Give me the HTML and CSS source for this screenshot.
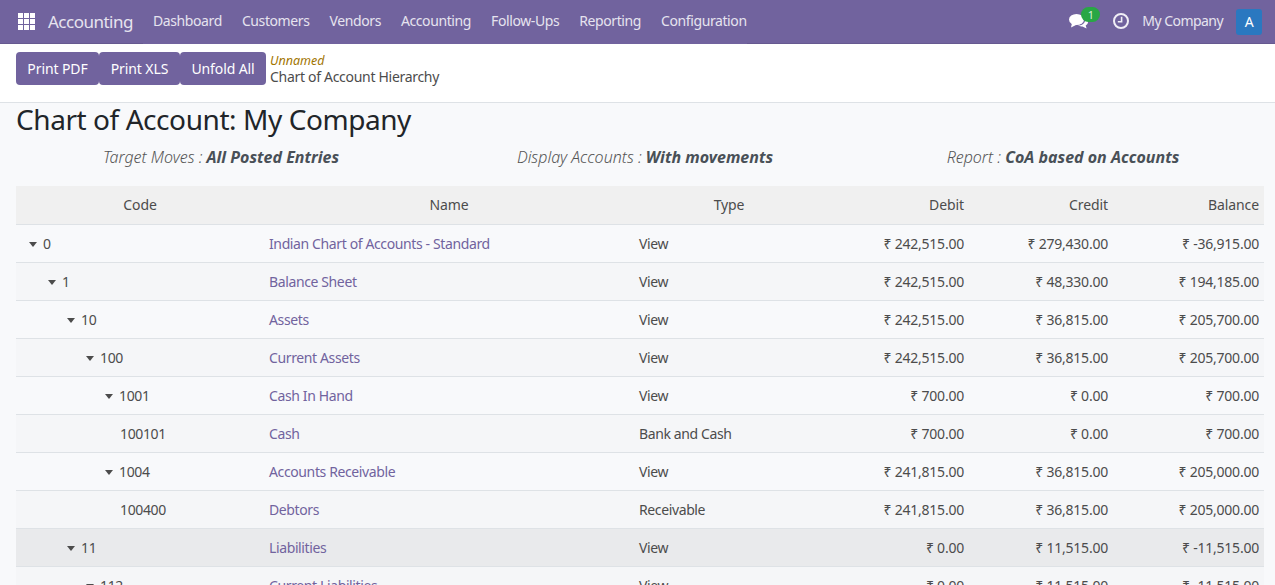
FILE: index.html
```html
<!DOCTYPE html>
<html lang="en">
<head>
    <meta charset="UTF-8">
    <title>Chart of Account Hierarchy</title>
    <link rel="stylesheet" href="styles.css">
</head>
<body>

    <nav class="nav-bar">
        <div class="nav-left">
            <a class="apps-icon" href="#">
                <svg width="17" height="17" viewBox="0 0 17 17" fill="#fff">
                    <rect x="0" y="0" width="5" height="5"/><rect x="6" y="0" width="5" height="5"/><rect x="12" y="0" width="5" height="5"/>
                    <rect x="0" y="6" width="5" height="5"/><rect x="6" y="6" width="5" height="5"/><rect x="12" y="6" width="5" height="5"/>
                    <rect x="0" y="12" width="5" height="5"/><rect x="6" y="12" width="5" height="5"/><rect x="12" y="12" width="5" height="5"/>
                </svg>
            </a>
            <a class="brand" href="#">Accounting</a>
        </div>
        <div class="nav-menu">
            <a href="#">Dashboard</a>
            <a href="#">Customers</a>
            <a href="#">Vendors</a>
            <a href="#">Accounting</a>
            <a href="#">Follow-Ups</a>
            <a href="#">Reporting</a>
            <a href="#">Configuration</a>
        </div>
        <div class="nav-right">
            <a class="messages" href="#">
                <svg width="19" height="15" viewBox="0 0 19 15" fill="#fff">
                    <ellipse cx="7.5" cy="5.5" rx="7.5" ry="5.5"/>
                    <path d="M3 9 L2 13.5 L8 10.5 Z"/>
                    <path d="M16.4 4.4 C18 5.2 19 6.5 19 8 C19 9.4 18.1 10.6 16.7 11.4 L17.6 14.6 L13.4 12.4 C11.6 12.6 9.9 12.2 8.8 11.6 C12.6 11.6 16.6 9.2 16.4 4.4 Z"/>
                </svg>
                <span class="badge">1</span>
            </a>
            <a class="clock" href="#">
                <svg width="16" height="16" viewBox="0 0 16 16" fill="none" stroke="#f1eff6">
                    <circle cx="8" cy="8" r="7" stroke-width="2"/>
                    <path d="M8.6 3.8 V8.8 H4.8" stroke-width="1.6"/>
                </svg>
            </a>
            <span class="company">My Company</span>
            <span class="avatar">A</span>
        </div>
    </nav>

    <div class="control-panel">
        <div class="button-group">
            <button>Print PDF</button>
            <button>Print XLS</button>
            <button>Unfold All</button>
        </div>
        <div class="breadcrumb">
            <a href="#">Unnamed</a>
            <span>Chart of Account Hierarchy</span>
        </div>
    </div>

    <main class="report">
        <h2>Chart of Account: My Company</h2>
        <div class="filters">
            <p>Target Moves : <b>All Posted Entries</b></p>
            <p>Display Accounts : <b>With movements</b></p>
            <p>Report : <b>CoA based on Accounts</b></p>
        </div>

        <table class="coa-table">
            <thead>
                <tr>
                    <th class="code-col">Code</th>
                    <th class="name-col">Name</th>
                    <th class="type-col">Type</th>
                    <th class="num debit-col">Debit</th>
                    <th class="num credit-col">Credit</th>
                    <th class="num balance-col">Balance</th>
                </tr>
            </thead>
            <tbody>
                <tr>
                    <td class="level-0"><i class="caret"></i>0</td>
                    <td><a href="#">Indian Chart of Accounts - Standard</a></td>
                    <td>View</td>
                    <td class="num">₹ 242,515.00</td>
                    <td class="num">₹ 279,430.00</td>
                    <td class="num">₹ -36,915.00</td>
                </tr>
                <tr>
                    <td class="level-1"><i class="caret"></i>1</td>
                    <td><a href="#">Balance Sheet</a></td>
                    <td>View</td>
                    <td class="num">₹ 242,515.00</td>
                    <td class="num">₹ 48,330.00</td>
                    <td class="num">₹ 194,185.00</td>
                </tr>
                <tr>
                    <td class="level-2"><i class="caret"></i>10</td>
                    <td><a href="#">Assets</a></td>
                    <td>View</td>
                    <td class="num">₹ 242,515.00</td>
                    <td class="num">₹ 36,815.00</td>
                    <td class="num">₹ 205,700.00</td>
                </tr>
                <tr>
                    <td class="level-3"><i class="caret"></i>100</td>
                    <td><a href="#">Current Assets</a></td>
                    <td>View</td>
                    <td class="num">₹ 242,515.00</td>
                    <td class="num">₹ 36,815.00</td>
                    <td class="num">₹ 205,700.00</td>
                </tr>
                <tr>
                    <td class="level-4"><i class="caret"></i>1001</td>
                    <td><a href="#">Cash In Hand</a></td>
                    <td>View</td>
                    <td class="num">₹ 700.00</td>
                    <td class="num">₹ 0.00</td>
                    <td class="num">₹ 700.00</td>
                </tr>
                <tr>
                    <td class="level-5">100101</td>
                    <td><a href="#">Cash</a></td>
                    <td>Bank and Cash</td>
                    <td class="num">₹ 700.00</td>
                    <td class="num">₹ 0.00</td>
                    <td class="num">₹ 700.00</td>
                </tr>
                <tr>
                    <td class="level-4"><i class="caret"></i>1004</td>
                    <td><a href="#">Accounts Receivable</a></td>
                    <td>View</td>
                    <td class="num">₹ 241,815.00</td>
                    <td class="num">₹ 36,815.00</td>
                    <td class="num">₹ 205,000.00</td>
                </tr>
                <tr>
                    <td class="level-5">100400</td>
                    <td><a href="#">Debtors</a></td>
                    <td>Receivable</td>
                    <td class="num">₹ 241,815.00</td>
                    <td class="num">₹ 36,815.00</td>
                    <td class="num">₹ 205,000.00</td>
                </tr>
                <tr class="hovered">
                    <td class="level-2"><i class="caret"></i>11</td>
                    <td><a href="#">Liabilities</a></td>
                    <td>View</td>
                    <td class="num">₹ 0.00</td>
                    <td class="num">₹ 11,515.00</td>
                    <td class="num">₹ -11,515.00</td>
                </tr>
                <tr>
                    <td class="level-3"><i class="caret"></i>112</td>
                    <td><a href="#">Current Liabilities</a></td>
                    <td>View</td>
                    <td class="num">₹ 0.00</td>
                    <td class="num">₹ 11,515.00</td>
                    <td class="num">₹ -11,515.00</td>
                </tr>
            </tbody>
        </table>
    </main>

</body>
</html>
```

FILE: styles.css
```css
/* Reset some default styles */
body, h2, p {
    margin: 0;
    padding: 0;
}

html, body {
    height: 585px;
    overflow: hidden;
}

body {
    font-family: 'Noto Sans', sans-serif;
    font-size: 14px;
    line-height: 21px;
    letter-spacing: -0.3px;
    background-color: #f8f9fb;
    color: #4c4c4c;
}

a {
    text-decoration: none;
}

/* Top bar */
.nav-bar {
    display: flex;
    align-items: stretch;
    height: 44px;
    background-color: #71639e;
}

.nav-bar a {
    color: #e6e3ef;
}

.nav-left {
    display: flex;
    align-items: center;
    width: 143px;
    box-sizing: border-box;
    padding-left: 18px;
    border-bottom: 1px solid #665990;
}

.apps-icon {
    display: flex;
    margin-right: 13px;
}

.brand {
    font-size: 17px;
    letter-spacing: -0.5px;
}

.nav-menu {
    display: flex;
    align-items: center;
    gap: 20px;
    padding: 0 0 4px 10px;
    letter-spacing: -0.4px;
}

.nav-right {
    display: flex;
    align-items: center;
    flex: 1;
    justify-content: flex-end;
    padding-right: 13px;
    border-bottom: 1px solid #665990;
    color: #e6e3ef;
}

.messages {
    position: relative;
    display: flex;
    margin-right: 25px;
}

.badge {
    position: absolute;
    top: -7px;
    left: 12px;
    width: 19px;
    height: 15px;
    border-radius: 8px;
    background-color: #28a745;
    color: #d9f0de;
    font-size: 11px;
    line-height: 15px;
    text-align: center;
}

.clock {
    display: flex;
    margin-right: 13px;
    margin-bottom: 2px;
}

.company {
    margin-right: 13px;
    margin-bottom: 2px;
    letter-spacing: -0.55px;
}

.avatar {
    width: 26px;
    height: 26px;
    border-radius: 3px;
    background-color: #2a78c0;
    color: #fff;
    line-height: 26px;
    text-align: center;
}

/* Control panel */
.control-panel {
    display: flex;
    align-items: center;
    height: 59px;
    box-sizing: border-box;
    padding: 0 16px 9px;
    background-color: #fff;
    border-bottom: 1px solid #dee2e6;
}

.button-group {
    display: flex;
    margin-right: 4px;
}

.button-group button {
    height: 33px;
    width: 83px;
    padding: 0;
    background-color: #71639e;
    color: #fff;
    font-family: inherit;
    font-size: 14px;
    letter-spacing: -0.1px;
    border: none;
    border-radius: 4px;
}

.button-group button:nth-child(2) { width: 81px; }
.button-group button:nth-child(3) { width: 86px; }

.breadcrumb {
    display: flex;
    flex-direction: column;
    line-height: 16px;
}

.breadcrumb a {
    color: #a27500;
    font-size: 12.5px;
    font-style: italic;
    letter-spacing: 0;
}

/* Report */
.report {
    padding: 0 11px 0 16px;
}

.report h2 {
    font-size: 28px;
    font-weight: 400;
    line-height: 32px;
    letter-spacing: -0.43px;
    color: #212529;
}

.filters {
    display: grid;
    grid-template-columns: 410px 438px 398px;
    margin-top: 10px;
    font-size: 16px;
    line-height: 24px;
    font-style: italic;
    font-weight: 300;
    letter-spacing: 0;
    text-align: center;
    color: #555;
}

.filters b {
    font-weight: 700;
    color: #495057;
}

.coa-table {
    width: 1248px;
    margin-top: 17px;
    border-collapse: collapse;
    table-layout: fixed;
}

.coa-table th, .coa-table td {
    height: 38px;
    box-sizing: border-box;
    padding: 0 5px;
    border-bottom: 1px solid #dee2e6;
    text-align: left;
    letter-spacing: -0.38px;
}

.coa-table th {
    background-color: #f0f0f0;
    font-weight: 400;
    text-align: center;
    letter-spacing: -0.1px;
}

.coa-table th.num, .coa-table td.num {
    text-align: right;
}

.coa-table td.num {
    letter-spacing: -0.22px;
}

.coa-table td a {
    color: #71639e;
}

.coa-table tbody tr:nth-child(even) {
    background-color: #f5f6f8;
}

.coa-table tbody tr.hovered {
    background-color: #e9eaec;
}

.code-col { width: 248px; }
.name-col { width: 370px; }
.type-col { width: 190px; }
.debit-col { width: 145px; }
.credit-col { width: 144px; }
.balance-col { width: 151px; }

.coa-table td.level-0 { padding-left: 13px; }
.coa-table td.level-1 { padding-left: 32px; }
.coa-table td.level-2 { padding-left: 51px; }
.coa-table td.level-3 { padding-left: 70px; }
.coa-table td.level-4 { padding-left: 89px; }
.coa-table td.level-5 { padding-left: 104px; }

.caret {
    display: inline-block;
    width: 0;
    height: 0;
    margin-right: 6px;
    vertical-align: 2px;
    border-top: 5px solid #4c4c4c;
    border-left: 4.5px solid transparent;
    border-right: 4.5px solid transparent;
}
```
